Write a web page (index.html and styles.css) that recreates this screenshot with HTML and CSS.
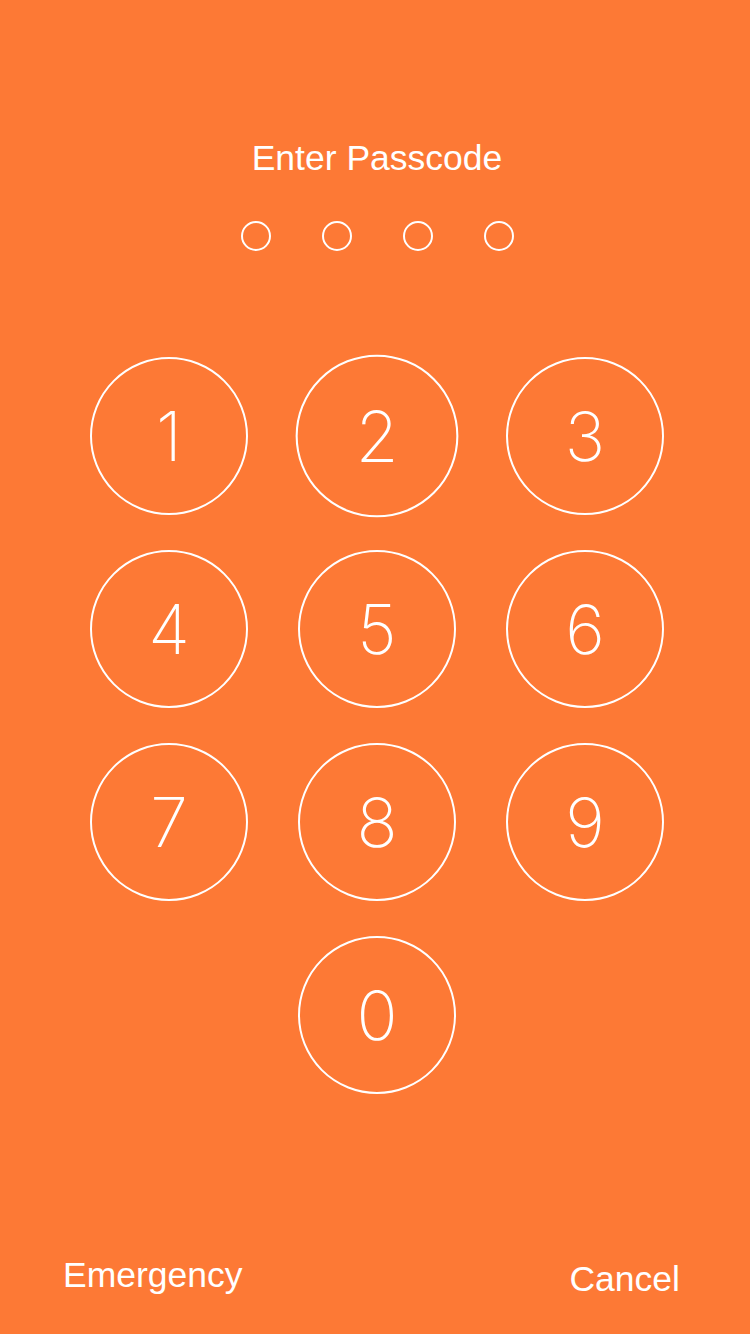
FILE: index.html
```html
<!DOCTYPE html>
<html>
<head>
<meta charset="utf-8">
<link rel="stylesheet" href="styles.css">
</head>
<body>
<div class="screen">
  <h1 class="title">Enter Passcode</h1>
  <div class="dots">
    <span class="dot"></span><span class="dot"></span><span class="dot"></span><span class="dot"></span>
  </div>
  <div class="keypad">
    <div class="key">1</div>
    <div class="key key--pressed">2</div>
    <div class="key">3</div>
    <div class="key">4</div>
    <div class="key">5</div>
    <div class="key">6</div>
    <div class="key">7</div>
    <div class="key">8</div>
    <div class="key">9</div>
    <div class="key key--zero">0</div>
  </div>
  <div class="footer">
    <span class="link">Emergency</span>
    <span class="link link--cancel">Cancel</span>
  </div>
</div>
</body>
</html>
```

FILE: styles.css
```css
html, body {
  margin: 0;
  padding: 0;
  background: #fd7935;
}
.screen {
  width: 750px;
  height: 1334px;
  display: flex;
  flex-direction: column;
  color: #fff;
  font-family: "Liberation Sans", Arial, sans-serif;
}
.title {
  margin: 138px 0 0;
  font-size: 35.5px;
  line-height: 40px;
  font-weight: normal;
  text-align: center;
  padding-left: 4px;
}
.dots {
  margin-top: 43px;
  display: flex;
  justify-content: center;
  gap: 51px;
  padding-left: 4px;
}
.dot {
  width: 30px;
  height: 30px;
  box-sizing: border-box;
  border: 2px solid #fff;
  border-radius: 50%;
}
.keypad {
  margin-top: 106px;
  padding-left: 90px;
  display: grid;
  grid-template-columns: repeat(3, 158px);
  grid-auto-rows: 158px;
  column-gap: 50px;
  row-gap: 35px;
}
.key {
  box-sizing: border-box;
  border: 2px solid #fff;
  border-radius: 50%;
  display: flex;
  align-items: center;
  justify-content: center;
  font-family: Inter, Roboto, "Liberation Sans", sans-serif;
  font-weight: 200;
  font-size: 68px;
  line-height: 1;
}
.key--pressed {
  transform: scale(1.03);
}
.key--zero {
  grid-column: 2;
}
.footer {
  margin-top: auto;
  margin-bottom: 35px;
  display: flex;
  justify-content: space-between;
  align-items: flex-start;
  padding: 0 70px 0 63px;
}
.link {
  font-size: 35.5px;
  line-height: 40px;
}
.link--cancel {
  padding-top: 4px;
}
```
